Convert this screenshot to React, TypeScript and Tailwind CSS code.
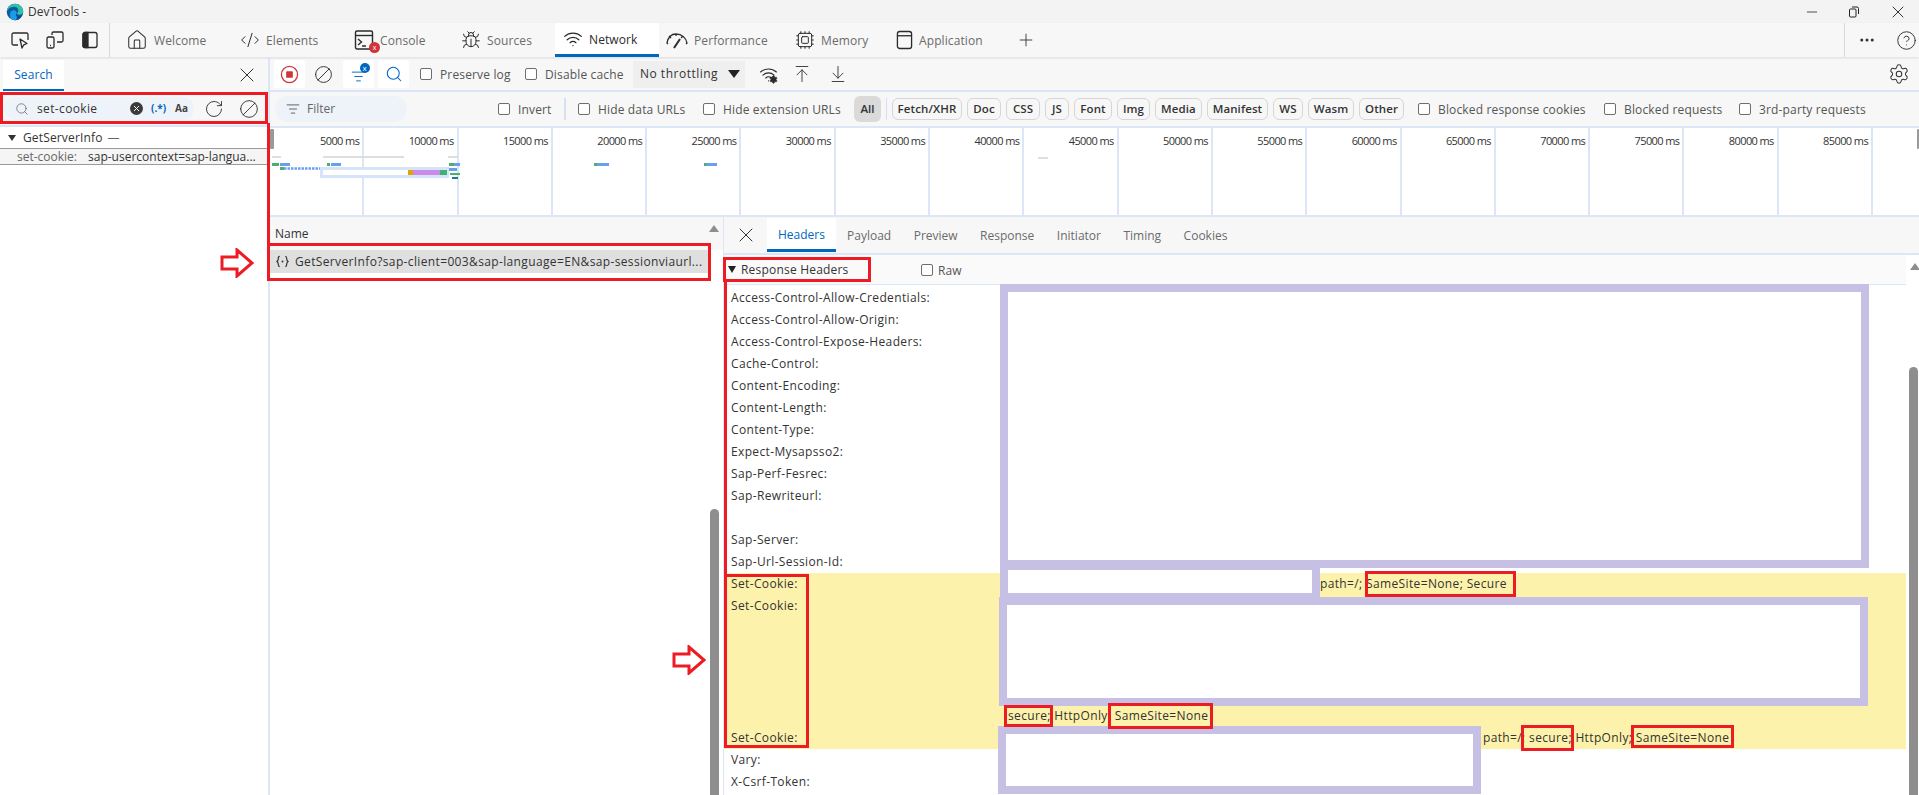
import { ArrowDownToLine, ArrowUpToLine, Ban, Bug, CircleHelp, CodeXml, Cpu, Ellipsis, House, ListFilter, Minus, Plus, RotateCw, Search, Settings, Wifi, X } from "lucide-react";
import type { ReactNode } from "react";

const font = "font-['Open_Sans','Liberation_Sans',sans-serif]";

function EdgeLogo() {
  return (
    <svg viewBox="0 0 24 24" className="h-[18px] w-[18px]">
      <circle cx="12" cy="12" r="11" fill="#0c59a4" />
      <path d="M1 12C1 5 6 1 12 1c6 0 11 4.500 11 10 0 3-2.500 4.500-5 4.500-2 0-3.500-.8-3.500-1.500 0-1 2-1.500 2-4C16.500 7 14 5 11 5 6 5 2 8 1 12z" fill="#2fc2a4" />
      <path d="M6 12c2-3 7-3 8 0 .5 2-1 3-1 4 0 2 3 3 6 2.500-2 2.500-4.500 4.500-8 4.500-4 0-7-4-5-11z" fill="#1b9de2" />
      <path d="M14 16c1 2 4 2 7 1-2 4-5 6-9 6 3-1 3-4 2-7z" fill="#0a4a8f" />
    </svg>
  );
}

function InspectIcon() {
  return (
    <svg viewBox="0 0 20 20" className="h-[20px] w-[20px]" fill="none" stroke="#2b2b2b" strokeWidth="1.300">
      <path d="M8 15H3.500A1.500 1.500 0 0 1 2 13.500v-9A1.500 1.500 0 0 1 3.500 3h13A1.500 1.500 0 0 1 18 4.500V10" />
      <path d="M10 9l2 9 1.800-3.200L17 13.500z" strokeLinejoin="round" />
    </svg>
  );
}

function DeviceIcon() {
  return (
    <svg viewBox="0 0 20 20" className="h-[20px] w-[20px]" fill="none" stroke="#2b2b2b" strokeWidth="1.300">
      <path d="M7 5V3.500A1.500 1.500 0 0 1 8.500 2h8A1.500 1.500 0 0 1 18 3.500v7a1.500 1.500 0 0 1-1.500 1.500H12" />
      <rect x="2" y="7" width="7" height="11" rx="1.500" />
      <path d="M5 15.500h1" />
    </svg>
  );
}

function DockIcon() {
  return (
    <svg viewBox="0 0 20 20" className="h-[20px] w-[20px]" fill="none" stroke="#2b2b2b" strokeWidth="1.300">
      <rect x="3" y="2.500" width="14" height="15" rx="2" />
      <path d="M3 4.500a2 2 0 0 1 2-2h3v15H5a2 2 0 0 1-2-2z" fill="#2b2b2b" />
    </svg>
  );
}

function ConsoleIcon() {
  return (
    <span className="relative flex h-[22px] w-[20px] items-center">
      <svg viewBox="0 0 20 22" className="h-[22px] w-[20px]" fill="none" stroke="#2b2b2b" strokeWidth="1.400">
        <rect x="1.500" y="2" width="17" height="18" rx="1.500" />
        <path d="M2 6.500h16" />
        <path d="M4 10l3.500 3L4 16M8 17h4" />
      </svg>
      <span className="absolute left-[15px] top-[13px] flex h-[11px] w-[11px] items-center justify-center rounded-full bg-[#d13438] text-[7px] leading-none text-white">x</span>
    </span>
  );
}

function GaugeIcon() {
  return (
    <svg viewBox="0 0 22 20" className="h-[20px] w-[22px]" fill="none" stroke="#2b2b2b" strokeWidth="1.300">
      <path d="M2 14l-1-1c1-5 4-9 9-9 6 0 10 4 11 9l-1 1" />
      <path d="M3 6l2 2M10 4v2M17 6l-2 2" />
      <path d="M8 18l6-9" strokeWidth="2" />
    </svg>
  );
}

function AppIcon() {
  return (
    <svg viewBox="0 0 18 22" className="h-[22px] w-[17px]" fill="none" stroke="#2b2b2b" strokeWidth="1.400">
      <rect x="1.500" y="2" width="15" height="18" rx="2.500" />
      <path d="M2 6.500h14" />
    </svg>
  );
}

function RecordIcon() {
  return (
    <svg viewBox="0 0 20 20" className="h-[19px] w-[19px]" fill="none">
      <circle cx="10" cy="10" r="8.500" stroke="#d13438" strokeWidth="1.300" />
      <rect x="6.500" y="6.500" width="7" height="7" rx="1" fill="#d13438" />
    </svg>
  );
}

function FilterBadgeIcon() {
  return (
    <span className="relative flex h-[20px] w-[22px] items-center justify-center">
      <ListFilter className="mt-[4px] h-[15px] w-[15px] text-[#0067c0]" strokeWidth={1.500} />
      <span className="absolute right-[0px] top-[-1px] flex h-[10px] w-[10px] items-center justify-center rounded-full bg-[#0067c0] text-[8px] leading-none text-white">x</span>
    </span>
  );
}

function WifiGearIcon() {
  return (
    <span className="relative flex h-[20px] w-[20px] items-center justify-center">
      <Wifi className="h-[19px] w-[19px] text-[#2b2b2b]" strokeWidth={1.400} />
      <Settings className="absolute bottom-[0px] right-[0px] h-[9px] w-[9px] fill-[#2b2b2b] text-[#2b2b2b]" strokeWidth={2} />
    </span>
  );
}

function JsonIcon() {
  return (
    <svg viewBox="0 0 14 14" className="mr-[6px] h-[13px] w-[13px]" fill="none" stroke="#333" strokeWidth="1.300">
      <path d="M4 1.500c-1.500 0-1.500 1-1.500 2.200S2.500 6 1 7c1.500 1 1.500 2.100 1.500 3.300s0 2.200 1.500 2.200" />
      <path d="M10 1.500c1.500 0 1.500 1 1.500 2.200S11.500 6 13 7c-1.500 1-1.500 2.100-1.500 3.300s0 2.200-1.500 2.200" />
      <circle cx="7" cy="7" r="1" fill="#333" stroke="none" />
    </svg>
  );
}

function Check({ label, className = "", tight }: { label: string; className?: string; tight?: boolean }) {
  return (
    <span className={`flex shrink-0 items-center whitespace-nowrap text-[12px] tracking-[0.15px] text-[#555] ${tight ? "gap-[5px]" : "gap-[8px]"} ${className}`}>
      <span className="h-[12px] w-[12px] shrink-0 rounded-[2px] border border-[#6e6e6e] bg-white" />
      <span className="pt-[2px]">{label}</span>
    </span>
  );
}

function TopTab({ icon, label, className, active }: { icon: ReactNode; label: string; className: string; active?: boolean }) {
  return (
    <div className={`flex h-[34px] items-center gap-[6px] ${className} ${active ? "border-b-[3px] border-[#0067c0] bg-white text-[#2b2b2b]" : "text-[#6b6b6b]"}`}>
      {icon}
      <span className="pt-[2px] text-[12px] tracking-[0.1px]">{label}</span>
    </div>
  );
}

function TitleBar() {
  return (
    <div className="flex h-[23px] items-center bg-[#f3f3f3] pl-[6px]">
      <EdgeLogo />
      <span className="ml-[4px] text-[12px] text-[#333]">DevTools -</span>
      <div className="ml-auto flex items-center gap-[28px] pr-[11px] text-[#222]">
        <Minus className="h-[16px] w-[16px]" strokeWidth={1.200} />
        <svg viewBox="0 0 12 12" className="h-[12px] w-[12px]" fill="none" stroke="#222" strokeWidth="1">
          <rect x="1.500" y="3" width="6.500" height="8" rx="1" />
          <path d="M4 1h5a1.500 1.500 0 0 1 1.500 1.500V8" />
        </svg>
        <X className="h-[20px] w-[20px]" strokeWidth={1.100} />
      </div>
    </div>
  );
}

function TabBar() {
  const ic = "h-[20px] w-[20px] text-[#2b2b2b]";
  return (
    <div className="relative z-10 flex h-[34px] items-center bg-[#f7f7f7] shadow-[0_1px_2px_rgba(0,0,0,0.15)]">
      <div className="flex h-full w-[110px] items-center gap-[15px] border-r border-[#d9d9d9] pl-[10px]">
        <InspectIcon />
        <DeviceIcon />
        <DockIcon />
      </div>
      <TopTab className="ml-[16px] w-[114px] gap-[5px]" icon={<House className="h-[22px] w-[22px] text-[#2b2b2b]" strokeWidth={1.100} />} label="Welcome" />
      <TopTab className="w-[114px]" icon={<CodeXml className={ic} strokeWidth={1.200} />} label="Elements" />
      <TopTab className="w-[107px]" icon={<ConsoleIcon />} label="Console" />
      <TopTab className="w-[94px]" icon={<Bug className={ic} strokeWidth={1.200} />} label="Sources" />
      <TopTab className="w-[104px] pl-[8px]" active icon={<Wifi className={ic} strokeWidth={1.500} />} label="Network" />
      <TopTab className="ml-[7px] w-[129px]" icon={<GaugeIcon />} label="Performance" />
      <TopTab className="w-[101px]" icon={<Cpu className={ic} strokeWidth={1.200} />} label="Memory" />
      <TopTab className="w-[120px]" icon={<AppIcon />} label="Application" />
      <Plus className="h-[20px] w-[20px] text-[#444]" strokeWidth={1.200} />
      <div className="ml-auto flex h-full w-[75px] items-center gap-[20px] border-l border-[#d9d9d9] pl-[13px]">
        <Ellipsis className="h-[18px] w-[18px] text-[#333]" strokeWidth={2} />
        <CircleHelp className="h-[21px] w-[21px] text-[#333]" strokeWidth={1.100} />
      </div>
    </div>
  );
}

function Sidebar() {
  return (
    <aside className="flex w-[270px] shrink-0 flex-col border-r-2 border-[#dbe6f6] bg-white">
      <div className="flex h-[34px] items-end justify-between bg-[#f7f7f7] pb-[1px] pl-[3px] pr-[9px]">
        <div className="flex h-[31px] w-[61px] items-center justify-center border-b-2 border-[#0067c0] bg-white text-[12px] tracking-[0.1px] text-[#0067c0]">Search</div>
        <X className="mb-[4px] h-[24px] w-[24px] text-[#333]" strokeWidth={1} />
      </div>
      <div className="flex h-[35px] items-center border-b-2 border-[#dbe6f6] bg-[#f7f7f7] pl-[4px]">
        <div className="flex h-[23px] w-[190px] items-center rounded-full bg-[#eef3fa] pl-[11px]">
          <Search className="h-[14px] w-[14px] text-[#666]" strokeWidth={1.300} />
          <span className="ml-[8px] w-[93px] text-[12px] tracking-[0.36px] text-[#333]">set-cookie</span>
          <span className="flex h-[13px] w-[13px] items-center justify-center rounded-full bg-[#3b3b3b]">
            <X className="h-[9px] w-[9px] text-white" strokeWidth={2.500} />
          </span>
          <span className="ml-[8px] w-[24px] text-[10px] font-bold text-[#0067c0]">(.*)</span>
          <span className="text-[10px] font-bold text-[#444]">Aa</span>
        </div>
        <RotateCw className="ml-[10px] h-[20px] w-[20px] text-[#333]" strokeWidth={1.100} />
        <Ban className="ml-[15px] h-[20px] w-[20px] scale-x-[-1] text-[#333]" strokeWidth={1.100} />
      </div>
      <div className="flex h-[22px] items-center border-b border-[#9a9a9a] pl-[8px] text-[12px] tracking-[0.15px] text-[#333]">
        <span className="mr-[7px] border-x-[4.500px] border-t-[6px] border-x-transparent border-t-[#333]" />
        GetServerInfo <span className="ml-[5px] text-[#666]">—</span>
      </div>
      <div className="flex h-[16px] items-center overflow-hidden whitespace-nowrap border-b border-[#9a9a9a] bg-[#f5f5f5] pl-[17px] text-[12px] text-[#333]">
        <span className="mr-[11px] text-[#666]">set-cookie:</span>
        sap-usercontext=sap-langua...
      </div>
    </aside>
  );
}

function NetworkToolbar() {
  return (
    <div className="flex h-[34px] items-center border-b-2 border-[#dbe6f6] bg-[#f7f7f7] pl-[4px]">
      <span className="flex h-[28px] w-[31px] items-center justify-center rounded-[3px] bg-white">
        <RecordIcon />
      </span>
      <Ban className="ml-[9px] h-[19px] w-[19px] scale-x-[-1] text-[#333]" strokeWidth={1.200} />
      <span className="ml-[10px] flex h-[28px] w-[31px] items-center justify-center rounded-[3px] bg-white">
        <FilterBadgeIcon />
      </span>
      <span className="ml-[4px] flex h-[28px] w-[31px] items-center justify-center rounded-[3px] bg-white">
        <Search className="h-[18px] w-[18px] text-[#0067c0]" strokeWidth={1.400} />
      </span>
      <Check className="ml-[11px] w-[90px]" label="Preserve log" />
      <Check className="ml-[15px] w-[99px]" label="Disable cache" />
      <span className="ml-[9px] flex h-[27px] w-[112px] items-center justify-between bg-[#efefef] pl-[7px] pr-[4px] text-[12px] tracking-[0.5px] text-[#333]">
        No throttling
        <span className="mr-[1px] border-x-[6px] border-t-[8px] border-x-transparent border-t-[#222]" />
      </span>
      <span className="ml-[13px]">
        <WifiGearIcon />
      </span>
      <ArrowUpToLine className="ml-[14px] h-[20px] w-[20px] text-[#333]" strokeWidth={1.100} />
      <ArrowDownToLine className="ml-[16px] h-[20px] w-[20px] text-[#333]" strokeWidth={1.100} />
      <Settings className="ml-auto mr-[9px] h-[22px] w-[22px] text-[#333]" strokeWidth={1.100} />
    </div>
  );
}

function Chip({ label, className }: { label: string; className: string }) {
  return <span className={`flex h-[22px] items-center justify-center rounded-[6px] border border-[#d6d6d6] text-[11.500px] font-semibold tracking-[0.1px] text-[#333] ${className}`}>{label}</span>;
}

function FilterBar() {
  return (
    <div className="flex h-[36px] items-center border-b-2 border-[#dbe6f6] bg-[#f7f7f7] pl-[5px]">
      <div className="flex h-[26px] w-[132px] items-center rounded-full bg-[#eef3fa] pl-[11px] text-[12px] text-[#666]">
        <ListFilter className="mr-[7px] h-[14px] w-[14px] text-[#444]" strokeWidth={1.400} />
        Filter
      </div>
      <Check className="ml-[91px] w-[53px]" label="Invert" />
      <span className="ml-[13px] h-[22px] w-[2px] bg-[#d6e0f0]" />
      <Check className="ml-[12px] w-[108px]" label="Hide data URLs" />
      <Check className="ml-[17px] w-[138px]" label="Hide extension URLs" />
      <span className="ml-[13px] flex h-[26px] w-[27px] items-center justify-center rounded-[6px] bg-[#dadada] text-[11.500px] font-semibold text-[#333]">All</span>
      <span className="ml-[5px] h-[22px] w-px bg-[#d6e0f0]" />
      <div className="ml-[5px] flex items-center gap-[5px]">
        <Chip className="w-[70px]" label="Fetch/XHR" />
        <Chip className="w-[34px]" label="Doc" />
        <Chip className="w-[34px]" label="CSS" />
        <Chip className="w-[24px]" label="JS" />
        <Chip className="w-[38px]" label="Font" />
        <Chip className="w-[33px]" label="Img" />
        <Chip className="w-[47px]" label="Media" />
        <Chip className="w-[61px]" label="Manifest" />
        <Chip className="w-[30px]" label="WS" />
        <Chip className="w-[46px]" label="Wasm" />
        <Chip className="w-[45px]" label="Other" />
      </div>
      <Check className="ml-[14px] w-[169px]" label="Blocked response cookies" />
      <Check className="ml-[17px] w-[118px]" label="Blocked requests" />
      <Check className="ml-[17px]" label="3rd-party requests" />
    </div>
  );
}

const marks = [5000, 10000, 15000, 20000, 25000, 30000, 35000, 40000, 45000, 50000, 55000, 60000, 65000, 70000, 75000, 80000, 85000];

function Overview() {
  return (
    <div className="relative flex h-[89px] border-b-2 border-[#dbe6f6] bg-white">
      {marks.map((m) => (
        <div key={m} className="w-[94.300px] shrink-0 border-r-2 border-[#dbe6f6] pr-[3px] pt-[4px] text-right text-[11px] leading-[18px] tracking-[-0.6px] text-[#333]">
          {m} ms
        </div>
      ))}
      <span className="absolute left-[0px] top-[1px] h-[20px] w-[4px] rounded-[1px] bg-[#9a9a9a]" />
      <span className="absolute right-[0px] top-[1px] h-[20px] w-[2px] rounded-[1px] bg-[#9a9a9a]" />
      <svg className="absolute left-[0px] top-[0px] h-[87px] w-[800px]" viewBox="0 0 800 87">
        <rect x="2" y="28" width="9" height="2" fill="#dedede" />
        <rect x="53" y="28" width="81" height="2" fill="#dedede" />
        <rect x="178" y="28" width="10" height="2" fill="#dedede" />
        <rect x="2" y="35" width="7" height="3" fill="#4caf6e" />
        <rect x="10" y="35" width="10" height="3" fill="#6a9ff0" />
        <rect x="10" y="39" width="4" height="3" fill="#4caf6e" />
        <line x1="14" y1="40.500" x2="58" y2="40.500" stroke="#6a9ff0" strokeWidth="2.500" strokeDasharray="2.500 1" />
        <rect x="57" y="35" width="3" height="3" fill="#4caf6e" />
        <rect x="61" y="35" width="10" height="3" fill="#6a9ff0" />
        <rect x="50" y="39" width="129" height="11" fill="#d6e4f8" />
        <rect x="53" y="42" width="86" height="5" fill="#ffffff" />
        <rect x="138" y="42" width="5" height="5" fill="#e0a500" />
        <rect x="143" y="42" width="27" height="5" fill="#c98ce8" />
        <rect x="170" y="42" width="7" height="5" fill="#3cb371" />
        <rect x="179" y="35" width="5" height="3" fill="#4caf6e" />
        <rect x="184" y="35" width="6" height="3" fill="#6a9ff0" />
        <rect x="179" y="40" width="8" height="3" fill="#6a9ff0" />
        <rect x="180" y="45" width="10" height="2" fill="#4caf6e" />
        <rect x="182" y="49" width="6" height="2" fill="#1f7a8c" />
        <rect x="324" y="35" width="3" height="3" fill="#4caf6e" />
        <rect x="327" y="35" width="12" height="3" fill="#6a9ff0" />
        <rect x="434" y="35" width="2" height="3" fill="#4caf6e" />
        <rect x="436" y="35" width="11" height="3" fill="#6a9ff0" />
        <rect x="768" y="29" width="10" height="2" fill="#dedede" />
      </svg>
    </div>
  );
}

function RequestList() {
  return (
    <div className="relative flex w-[453px] shrink-0 flex-col">
      <div className="flex h-[33px] items-center bg-[#f7f7f7] pl-[5px] text-[12px] text-[#333]">Name</div>
      <div className="flex h-[23px] w-[440px] items-center whitespace-nowrap bg-[#dfdfdf] pl-[6px] text-[12px] tracking-[0.36px] text-[#333]">
        <JsonIcon />
        GetServerInfo?sap-client=003&amp;sap-language=EN&amp;sap-sessionviaurl...
      </div>
      <span className="absolute right-[4px] top-[8px] border-x-[5px] border-b-[7px] border-x-transparent border-b-[#8e8e8e]" />
      <span className="absolute bottom-[0px] right-[4px] top-[292px] w-[9px] rounded-t-[5px] bg-[#8e8e8e]" />
    </div>
  );
}

const topHeaders = [
  "Access-Control-Allow-Credentials:",
  "Access-Control-Allow-Origin:",
  "Access-Control-Expose-Headers:",
  "Cache-Control:",
  "Content-Encoding:",
  "Content-Length:",
  "Content-Type:",
  "Expect-Mysapsso2:",
  "Sap-Perf-Fesrec:",
  "Sap-Rewriteurl:",
  "",
  "Sap-Server:",
  "Sap-Url-Session-Id:",
];

function HeaderRow({ name }: { name: string }) {
  return <div className="h-[22px] pl-[7px] leading-[22px]">{name}</div>;
}

function Details() {
  const tabs = ["Payload", "Preview", "Response", "Initiator", "Timing", "Cookies"];
  return (
    <div className="relative flex min-w-0 flex-1 flex-col overflow-hidden border-l border-[#dbe6f6]">
      <div className="flex h-[38px] items-center border-b-2 border-[#dbe6f6] bg-[#f7f7f7] pl-[10px]">
        <X className="mr-[9px] h-[24px] w-[24px] text-[#333]" strokeWidth={1} />
        <span className="flex h-[34px] w-[69px] items-center justify-center border-b-[3px] border-[#0067c0] bg-white pt-[2px] text-[12px] text-[#0067c0]">Headers</span>
        <div className="ml-[11px] flex gap-[22.500px] pt-[2px] text-[12px] text-[#6b6b6b]">
          {tabs.map((t) => (
            <span key={t}>{t}</span>
          ))}
        </div>
      </div>
      <div className="flex min-h-0 flex-1">
        <div className="min-w-0 flex-1">
          <div className="flex h-[30px] items-center border-b border-[#dbe6f6] bg-[#fafafa] pl-[4px] text-[12px] text-[#333]">
            <span className="mr-[5px] border-x-[4px] border-t-[7px] border-x-transparent border-t-[#222]" />
            <span className="w-[180px] tracking-[0.2px]">Response Headers</span>
            <Check tight label="Raw" />
          </div>
          <div className="pt-[2px] text-[12px] tracking-[0.36px] text-[#333]">
            {topHeaders.map((h, i) => (
              <HeaderRow key={i} name={h} />
            ))}
            <div className="bg-[#fdf2ab]">
              <div className="flex h-[22px] leading-[22px]">
                <span className="w-[276px] shrink-0 pl-[7px]">Set-Cookie:</span>
                <span className="ml-[320px] whitespace-pre">path=/; SameSite=None; Secure</span>
              </div>
              <div className="flex h-[132px] items-end leading-[22px]">
                <span className="w-[276px] shrink-0 self-start pl-[7px]">Set-Cookie:</span>
                <span className="ml-[8px] whitespace-pre">secure; HttpOnly; SameSite=None</span>
              </div>
              <div className="flex h-[22px] leading-[22px]">
                <span className="w-[276px] shrink-0 pl-[7px]">Set-Cookie:</span>
                <span className="ml-[483px] whitespace-pre">path=/; secure; HttpOnly; SameSite=None</span>
              </div>
            </div>
            <HeaderRow name="Vary:" />
            <HeaderRow name="X-Csrf-Token:" />
          </div>
        </div>
        <div className="relative w-[13px] shrink-0">
          <span className="absolute left-[4px] top-[8px] border-x-[5px] border-b-[7px] border-x-transparent border-b-[#8e8e8e]" />
          <span className="absolute bottom-[0px] left-[3px] top-[112px] w-[9px] rounded-t-[5px] bg-[#8e8e8e]" />
        </div>
      </div>
    </div>
  );
}

function ArrowMark({ className }: { className: string }) {
  return (
    <svg viewBox="0 0 34 30" className={className} fill="none" stroke="#ed1c24" strokeWidth="3">
      <path d="M2 9h15V2l15 13-15 13v-7H2z" />
    </svg>
  );
}

// redaction blocks and the red callouts painted on top of the screenshot
function Annotations() {
  const lav = "absolute border-[8px] border-[#c7c0e5] bg-white";
  const red = "absolute border-[3px] border-[#ed1c24]";
  return (
    <>
      <div className={`${lav} left-[1000px] top-[284px] h-[284px] w-[869px]`} />
      <div className="absolute left-[1000px] top-[568px] h-[29px] w-[320px] border-x-[8px] border-b-[4px] border-t-[2px] border-[#c7c0e5] bg-white" />
      <div className={`${lav} left-[999px] top-[597px] h-[109px] w-[869px]`} />
      <div className={`${lav} left-[998px] top-[726px] h-[68px] w-[483px]`} />

      <div className={`${red} left-[0px] top-[92px] h-[32px] w-[268px]`} />
      <div className="absolute left-[267px] top-[123px] h-[121px] w-[3px] bg-[#ed1c24]" />
      <div className={`${red} left-[267px] top-[243px] h-[38px] w-[444px]`} />
      <div className={`${red} left-[723px] top-[257px] h-[25px] w-[148px]`} />
      <div className="absolute left-[724px] top-[282px] h-[292px] w-[3px] bg-[#ed1c24]" />
      <div className={`${red} left-[724px] top-[574px] h-[174px] w-[85px]`} />
      <div className={`${red} left-[1365px] top-[571px] h-[26px] w-[151px]`} />
      <div className={`${red} left-[1004px] top-[705px] h-[22px] w-[49px]`} />
      <div className={`${red} left-[1108px] top-[703px] h-[26px] w-[105px]`} />
      <div className={`${red} left-[1521px] top-[725px] h-[26px] w-[53px]`} />
      <div className={`${red} left-[1631px] top-[725px] h-[23px] w-[103px]`} />

      <ArrowMark className="absolute left-[220px] top-[248px] h-[30px] w-[34px]" />
      <ArrowMark className="absolute left-[672px] top-[645px] h-[30px] w-[34px]" />
    </>
  );
}

export default function App() {
  return (
    <div className={`relative flex h-[795px] w-[1919px] flex-col overflow-hidden bg-white ${font}`}>
      <TitleBar />
      <TabBar />
      <div className="flex min-h-0 flex-1 pt-[1px]">
        <Sidebar />
        <main className="flex min-w-0 flex-1 flex-col">
          <NetworkToolbar />
          <FilterBar />
          <Overview />
          <div className="flex min-h-0 flex-1">
            <RequestList />
            <Details />
          </div>
        </main>
      </div>
      <Annotations />
    </div>
  );
}
